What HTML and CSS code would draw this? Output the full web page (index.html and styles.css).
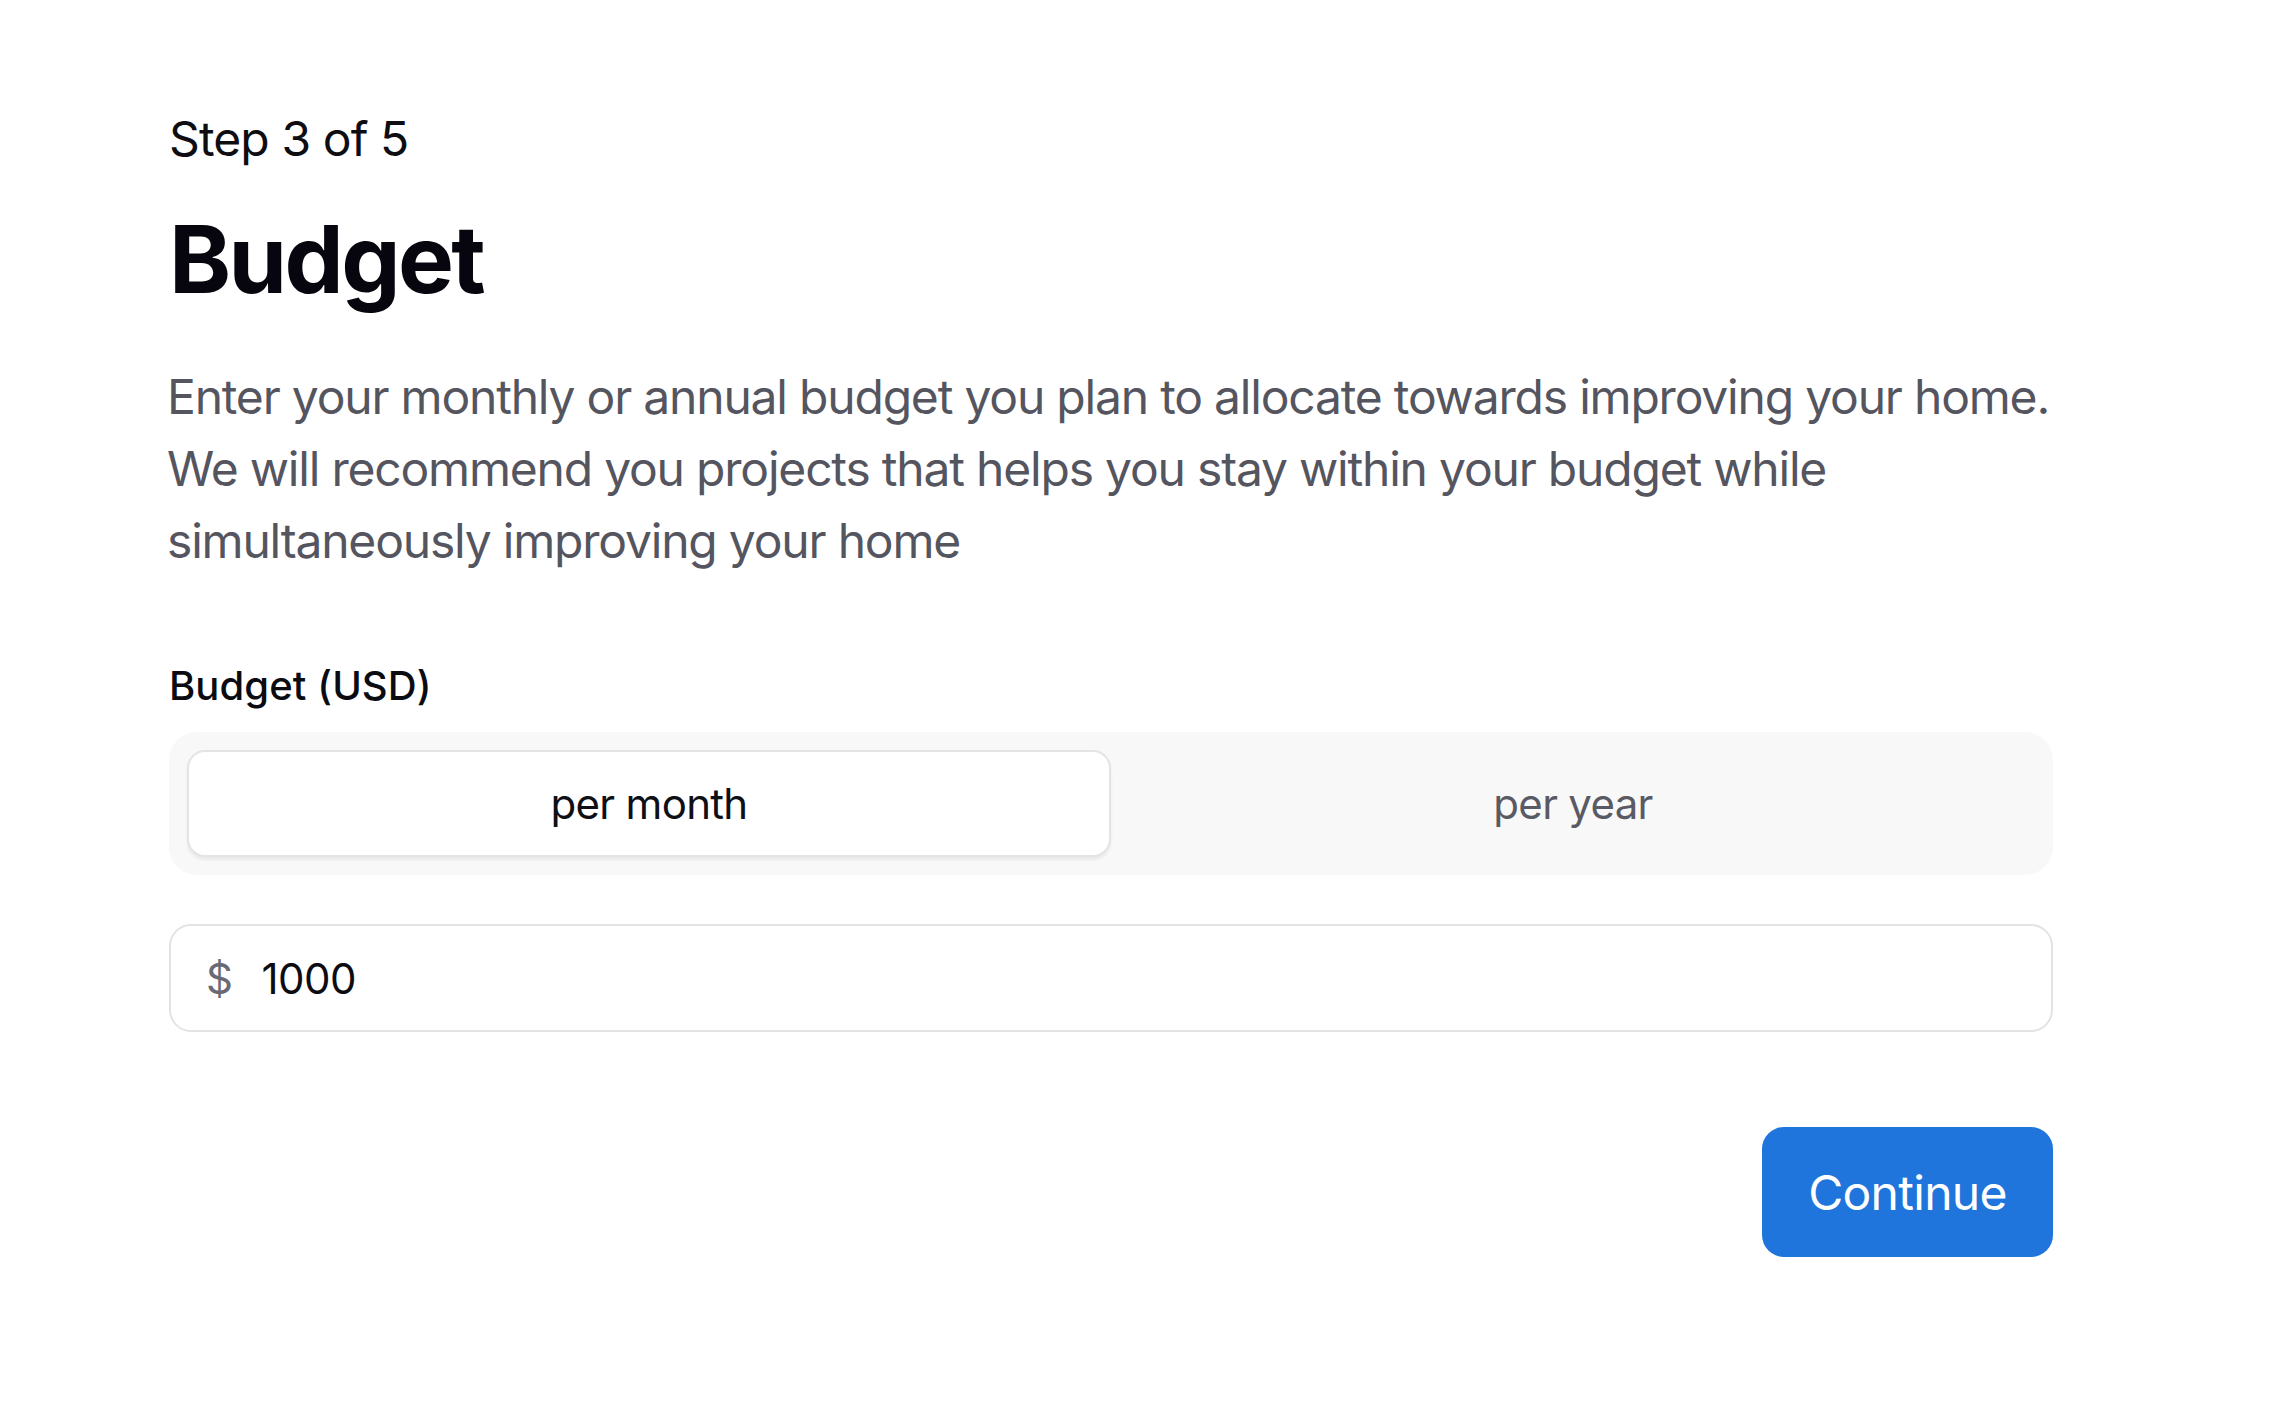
FILE: index.html
```html
<!DOCTYPE html>
<html lang="en">
<head>
<meta charset="utf-8">
<title>Budget</title>
<link rel="stylesheet" href="styles.css">
</head>
<body>
<main class="page">
  <div class="step">Step 3 of 5</div>
  <h1 class="title">Budget</h1>
  <p class="intro">Enter your monthly or annual budget you plan to allocate towards improving your home. We will recommend you projects that helps you stay within your budget while simultaneously improving your home</p>
  <div class="field-label">Budget (USD)</div>
  <div class="segmented">
    <button class="seg seg-active" type="button">per month</button>
    <button class="seg" type="button">per year</button>
  </div>
  <div class="amount">
    <span class="currency">$</span>
    <span class="value">1000</span>
  </div>
  <div class="actions">
    <button class="continue" type="button">Continue</button>
  </div>
</main>
</body>
</html>
```

FILE: styles.css
```css
* { box-sizing: border-box; }
html, body { margin: 0; padding: 0; background: #ffffff; }
body { font-family: Inter, "Noto Sans", sans-serif; color: #111118; }

.page {
  width: 1884px;
  margin-left: 169px;
  padding-top: 110px;
  display: flex;
  flex-direction: column;
}

.step {
  font-size: 48px;
  line-height: 58px;
  color: #0d0d12;
  letter-spacing: -0.9px;
}

.title {
  margin: 35px 0 0;
  font-size: 94px;
  line-height: 112px;
  font-weight: 700;
  color: #07060f;
  letter-spacing: -2.6px;
}

.intro {
  margin: 46px -30px 0 -2px;
  font-size: 48px;
  line-height: 72px;
  color: #55555f;
  letter-spacing: -1.2px;
}

.field-label {
  margin-top: 85px;
  font-size: 40px;
  line-height: 48px;
  font-weight: 500;
  color: #0b0b12;
  letter-spacing: 0.1px;
}

.segmented {
  margin-top: 22px;
  height: 143px;
  padding: 18px;
  background: #f8f8f9;
  border-radius: 28px;
  display: grid;
  grid-template-columns: 1fr 1fr;
}

.seg {
  font-family: inherit;
  font-size: 42px;
  letter-spacing: -0.7px;
  background: transparent;
  border: 0;
  color: #5a5a64;
  border-radius: 18px;
  padding: 0;
}

.seg-active {
  background: #ffffff;
  color: #0f0f16;
  border: 2px solid #e4e4e6;
  box-shadow: 0 3px 3px rgba(0, 0, 0, 0.06);
}

.amount {
  margin-top: 49px;
  height: 108px;
  border: 2px solid #e3e3e5;
  border-radius: 22px;
  display: flex;
  align-items: center;
  padding-left: 35px;
  gap: 29px;
  font-size: 42px;
  letter-spacing: -0.5px;
}

.currency { color: #6a6a74; }
.value { color: #0c0c12; }

.actions {
  margin-top: 95px;
  display: flex;
  justify-content: flex-end;
}

.continue {
  width: 291px;
  height: 130px;
  border: 0;
  border-radius: 22px;
  background: #1f75dc;
  color: #ffffff;
  font-family: inherit;
  font-size: 48px;
  letter-spacing: -0.7px;
  padding: 0;
}
```
